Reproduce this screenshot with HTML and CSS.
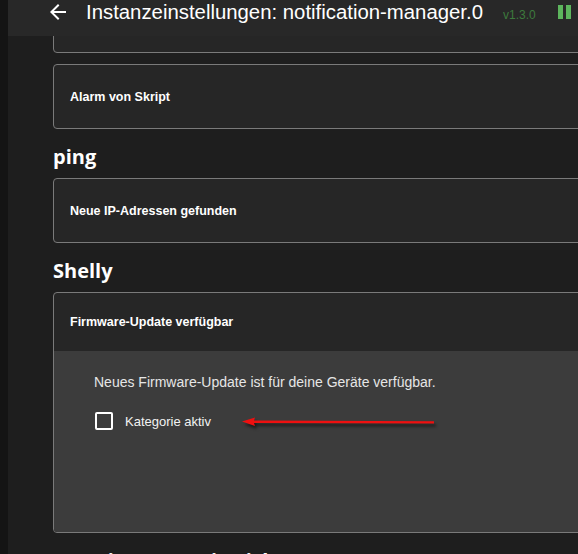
FILE: index.html
```html
<!DOCTYPE html>
<html lang="de">
<head>
<meta charset="utf-8">
<title>Instanzeinstellungen</title>
<link rel="stylesheet" href="styles.css">
</head>
<body>
<div class="app">
  <div class="rail"></div>
  <div class="main">
    <header class="topbar">
      <svg class="back" viewBox="0 0 24 24" aria-hidden="true"><path d="M20 11H7.83l5.59-5.59L12 4l-8 8 8 8 1.41-1.41L7.83 13H20v-2z"/></svg>
      <h1 class="title">Instanzeinstellungen: notification-manager.0</h1>
      <span class="version">v1.3.0</span>
      <span class="pause"><i></i><i></i></span>
    </header>
    <div class="content">
      <div class="card card-cut"><div class="card-head"></div></div>
      <div class="card"><div class="card-head">Alarm von Skript</div></div>
      <h2 class="group">ping</h2>
      <div class="card"><div class="card-head">Neue IP-Adressen gefunden</div></div>
      <h2 class="group">Shelly</h2>
      <div class="card card-open">
        <div class="card-head">Firmware-Update verfügbar</div>
        <div class="card-body">
          <p class="desc">Neues Firmware-Update ist für deine Geräte verfügbar.</p>
          <label class="check-row"><span class="box"></span><span class="check-label">Kategorie aktiv</span></label>
          <svg class="annot" width="194" height="14" viewBox="0 0 194 14" aria-hidden="true">
            <path d="M0 6.5 L13 2.5 L12 5.5 L192 6.2 L192 8.6 L12 8 L13 11 Z" fill="#ee1010"/>
          </svg>
        </div>
      </div>
      <h2 class="group">Austria B (Austria Licht)</h2>
    </div>
  </div>
</div>
</body>
</html>
```
FILE: styles.css
```css
html, body {
  margin: 0;
  padding: 0;
  background: #1e1e1e;
}
body {
  font-family: "Liberation Sans", Arial, sans-serif;
  color: #fff;
}
.app {
  display: flex;
  height: 554px;
  overflow: hidden;
}
.rail {
  width: 8px;
  flex: none;
  background: #141414;
}
.main {
  flex: 1;
  display: flex;
  flex-direction: column;
  overflow: hidden;
  min-width: 0;
}
.topbar {
  height: 36px;
  flex: none;
  background: #282828;
  display: flex;
  align-items: baseline;
  padding-left: 38px;
  white-space: nowrap;
  position: relative;
  z-index: 2;
}
.back {
  align-self: flex-start;
  width: 24px;
  height: 24px;
  fill: #fff;
  flex: none;
}
.title {
  margin: 0 0 0 16px;
  font-size: 20.35px;
  line-height: 24px;
  font-weight: 400;
  color: #fff;
}
.version {
  margin-left: 20px;
  font-size: 12px;
  color: #3d7a3d;
}
.pause {
  align-self: flex-start;
  margin: 5px 0 0 22px;
  display: flex;
  gap: 3px;
  flex: none;
}
.pause i {
  display: block;
  width: 5px;
  height: 14px;
  background: #5db55d;
}
.content {
  flex: 1;
  overflow: hidden;
  padding-left: 45px;
  margin-right: -40px;
}
.card {
  border: 1px solid #7a7a7a;
  border-radius: 4px;
  background: #262626;
  overflow: hidden;
  margin-top: 11px;
}
.card-cut {
  margin-top: -48px;
}
.card-head {
  height: 63px;
  display: flex;
  align-items: center;
  padding-left: 16px;
  font-size: 12.5px;
  font-weight: 700;
  color: #fff;
}
.card-open .card-head {
  height: 58px;
}
.card-body {
  position: relative;
  background: #3c3c3c;
  height: 181px;
  box-sizing: border-box;
  padding: 23px 0 0 40px;
}
.desc {
  margin: 0;
  font-size: 14px;
  line-height: 16px;
  color: #e6e6e6;
}
.check-row {
  display: flex;
  align-items: center;
  margin-top: 22px;
  height: 18px;
}
.box {
  box-sizing: border-box;
  width: 18px;
  height: 18px;
  margin-left: 1px;
  border: 2px solid #fff;
  border-radius: 2px;
  flex: none;
}
.check-label {
  margin-left: 12px;
  font-size: 13px;
  color: #f2f2f2;
}
.annot {
  position: absolute;
  left: 188px;
  top: 64px;
  filter: drop-shadow(2px 3px 1.5px rgba(0, 0, 0, 0.55));
}
.group {
  margin: 14px 0 7px;
  font-family: "Open Sans", "Liberation Sans", sans-serif;
  font-size: 20px;
  line-height: 28px;
  font-weight: 700;
  color: #fff;
}
.group + .card {
  margin-top: 0;
}
```
